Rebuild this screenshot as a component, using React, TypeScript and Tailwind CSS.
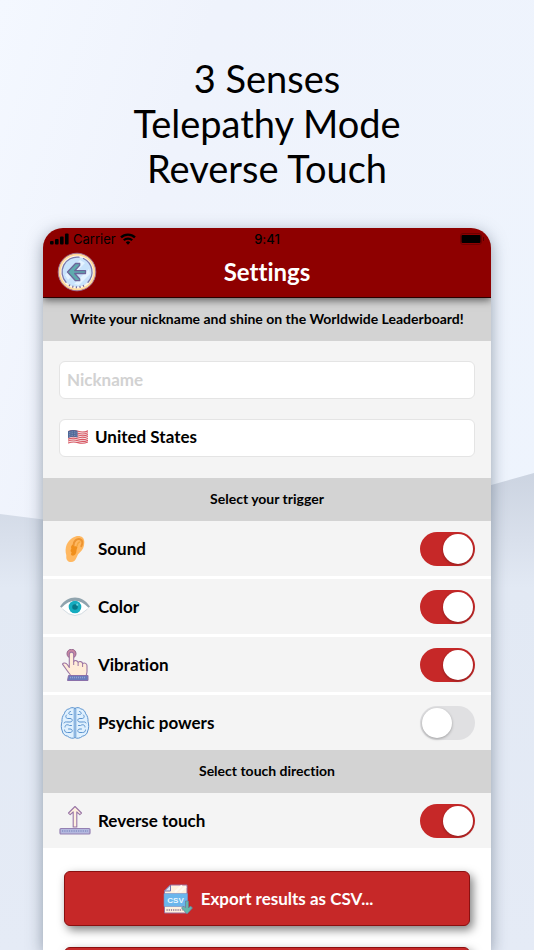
import { useState } from "react";
import type { ReactNode } from "react";

function Backdrop() {
  return (
    <svg
      className="absolute inset-0 h-full w-full"
      viewBox="0 0 534 950"
      preserveAspectRatio="none"
      aria-hidden="true"
    >
      <defs>
        <linearGradient id="sky" x1="0" y1="0" x2="1" y2="0.6">
          <stop offset="0" stopColor="#f4f8ff" />
          <stop offset="0.3" stopColor="#eff3fc" />
          <stop offset="1" stopColor="#eef4fd" />
        </linearGradient>
        <linearGradient id="fold" x1="0" y1="0" x2="0" y2="1">
          <stop offset="0" stopColor="#ccd4e1" />
          <stop offset="0.14" stopColor="#d9e0ec" />
          <stop offset="0.24" stopColor="#e2e9f4" />
          <stop offset="1" stopColor="#e5ebf6" />
        </linearGradient>
      </defs>
      <rect width="534" height="950" fill="url(#sky)" />
      <path d="M0 514 L267 548 L534 473 V950 H0Z" fill="url(#fold)" />
    </svg>
  );
}

function SignalIcon() {
  return (
    <svg className="h-3 w-[19px]" viewBox="0 0 19 12" aria-hidden="true">
      <rect x="0" y="8" width="3.6" height="3.5" rx="1" />
      <rect x="5" y="6" width="3.6" height="5.5" rx="1" />
      <rect x="10" y="3.500" width="3.6" height="8" rx="1" />
      <rect x="15" y="0.500" width="3.6" height="11" rx="1" />
    </svg>
  );
}

function WifiIcon() {
  return (
    <svg className="h-3 w-4" viewBox="0 0 16 12" fill="none" stroke="black" strokeWidth="2.3" aria-hidden="true">
      <path d="M1 4.4a10 10 0 0 1 14 0" />
      <path d="M3.8 7.3a6 6 0 0 1 8.4 0" />
      <path d="M8 11.8 5.8 9.4a3.2 3.2 0 0 1 4.4 0Z" fill="black" stroke="none" />
    </svg>
  );
}

function BatteryIcon() {
  return (
    <svg className="h-3 w-6" viewBox="0 0 24 12" aria-hidden="true">
      <rect x="0.5" y="0.5" width="21" height="11" rx="2.5" fill="none" stroke="#6c0000" />
      <rect x="1.500" y="2" width="19" height="8" rx="1" />
      <path d="M23.500 4v4" stroke="#5c0000" />
    </svg>
  );
}

function BackIcon() {
  return (
    <svg className="h-10 w-10" viewBox="0 0 40 40" aria-hidden="true">
      <circle cx="20" cy="20" r="18.800" fill="#ffd899" stroke="#9b719b" strokeWidth="0.900" />
      <circle cx="20" cy="20" r="16.500" fill="#fdf5e8" />
      <circle cx="20" cy="20" r="15" fill="#c9e3fb" />
      <path d="M8 23 23 8l5 3L11 28ZM17 32 32 17l1 5-11 11Z" fill="#e5f4ff" />
      <path
        d="M26.500 6.500A15 15 0 0 1 31 30.200M9 30.200A15 15 0 0 1 22 5.200"
        fill="none"
        stroke="#7a79ad"
        strokeWidth="1.300"
        strokeLinecap="round"
      />
      <path d="M12 33a15.500 15.500 0 0 0 16 0" fill="none" stroke="#776c9e" strokeWidth="2" strokeDasharray="1.200 2.400" />
      <path
        d="M10.500 20 18.500 11.500h4.200v1.700L17.700 18.700H28.500v2.800H17.700l5 5.500v1.700h-4.200Z"
        fill="#5eaaae"
        stroke="#6c669b"
        strokeWidth="1.300"
        strokeLinejoin="round"
      />
    </svg>
  );
}

function FlagIcon() {
  return (
    <svg className="h-4 w-5" viewBox="0 0 20 16" aria-hidden="true">
      <path d="M0 2.2Q5 0 10 1.8T20 1.2V13.4Q15 15.2 10 14T0 14.8Z" fill="#f5eeee" />
      <g fill="none" stroke="#d95763" strokeWidth="1.1">
        <path d="M0 2.6Q5 .6 10 2.3T20 1.8" />
        <path d="M0 4.5Q5 2.5 10 4.2T20 3.7" />
        <path d="M0 6.4Q5 4.4 10 6.1T20 5.6" />
        <path d="M0 8.3Q5 6.3 10 8T20 7.5" />
        <path d="M0 10.2Q5 8.2 10 9.9T20 9.4" />
        <path d="M0 12.1Q5 10.1 10 11.8T20 11.3" />
        <path d="M0 14.1Q5 12.1 10 13.6T20 13" />
      </g>
      <path d="M0 2.2Q5 0 9.5 1.8V8.4Q5 6.8 0 8.9Z" fill="#4d6697" />
      <path
        d="M1 3.8Q5 2 9 3.5M1 5.6Q5 3.8 9 5.3M1 7.4Q5 5.6 9 7.1"
        fill="none"
        stroke="#b9c6dc"
        strokeWidth="0.6"
        strokeDasharray="0.8 0.9"
      />
    </svg>
  );
}

function EarIcon() {
  return (
    <svg className="h-8 w-8" viewBox="0 0 32 32" aria-hidden="true">
      <path
        d="M16.500 3.500C21 2 25.300 4 25.300 9c0 5-1.700 8-4.500 10.500-2 1.800-2.300 3-3 4.500-1 3-3 5-5.700 5C9 29 7 27 7.300 23.500c.2-1.700-.4-2.500-.6-4C6 12 9.500 6 16.500 3.500Z"
        fill="#ffb861"
      />
      <path
        d="M14.500 12.500C14.500 8 18 5.300 21 6.200c2.900 1 2.900 4 1.300 7"
        fill="none"
        stroke="#ec9432"
        strokeWidth="2"
        strokeLinecap="round"
      />
      <path
        d="M14 11.500c-.3 2.300 2.700 1.500 4 2 1 1-.5 2.300-.5 4 .1 3.500-2.200 5.700-4.500 5-1.400-.4-1-2-.4-3.200-1.600-1-1-2.700-.2-3.600-.8-1.500-.1-3.700 1.600-4.200Z"
        fill="#f08f1b"
      />
      <path d="M18 13.500C18.500 10 20 8.500 21.500 9" fill="none" stroke="#f5a73f" strokeWidth="1.500" />
    </svg>
  );
}

function EyeIcon() {
  return (
    <svg className="h-8 w-8" viewBox="0 0 32 32" aria-hidden="true">
      <path d="M2 16Q16 2 30 16Q16 32 2 16Z" fill="#fff" />
      <path d="M3.500 18Q16 31 28.500 18" fill="none" stroke="#d4dde3" strokeWidth="1" />
      <path d="M1 15.500C9 3.500 23 3.500 31 15.500l-1.500 1.200C21 7.500 11 7.500 2.500 16.700Z" fill="#90a4ae" />
      <circle cx="16" cy="16" r="6.300" fill="#15acbf" />
      <circle cx="16" cy="16" r="2.800" fill="#087788" />
      <circle cx="18.300" cy="13.700" r="1.100" fill="#6ed3df" />
    </svg>
  );
}

function TapIcon() {
  return (
    <svg className="h-8 w-8" viewBox="0 0 32 32" strokeLinejoin="round" aria-hidden="true">
      <circle cx="12.500" cy="4.700" r="4.500" fill="#ca87a2" stroke="#93668e" />
      <path
        d="M10.300 18.500V5.300a2.200 2.200 0 0 1 4.400 0v7.400c1-1.700 3.700-1.500 4.400.7 1.500-1.500 4-.9 4.500 1.100 2.200-1.200 4.400.1 4.400 2.300v5.700c0 1.700-.7 2.700-.7 4.300H11.600c-.3-1.700-2-3-3-4.500l-5.100-7.200c1-1.800 3.500-1.100 4.800.4Z"
        fill="#ffecd8"
        stroke="#9c75a3"
        strokeWidth="1.100"
      />
      <path d="M14.700 12.500V16M19.100 13.500V17M23.600 14.500V18" stroke="#9c75a3" />
      <path d="M9.500 26.500h19.500v5h-20.500Z" fill="#6a7cbb" stroke="#8b70aa" />
      <path d="M11 28.500h16" stroke="#93a0d4" strokeWidth="1.500" strokeDasharray="1 1" />
    </svg>
  );
}

function BrainIcon() {
  return (
    <svg
      className="h-8 w-8"
      viewBox="0 0 32 32"
      fill="none"
      stroke="#5b93cf"
      strokeWidth="1"
      strokeLinecap="round"
      aria-hidden="true"
    >
      <path
        d="M16 1.300C14 0 11.500.6 10.300 1.800 7.300 2.200 5.800 4.500 5.300 6.800 3.300 9 2.800 12 3 14.500 2 17.500 2 21.500 3.300 24c.4 3 2.700 4.800 5.200 5.200 2.500 2.300 6 2.600 7.500 1.300 1.500 1.300 5 1 7.500-1.300 2.500-.4 4.800-2.200 5.200-5.200 1.300-2.500 1.300-6.500.3-9.500.2-2.500-.3-5.500-2.300-7.700-.5-2.300-2-4.600-5-5C20.500.6 18 0 16 1.300Z"
        fill="#dff0fe"
      />
      <path d="M15.200 2v28M16.800 2v28" strokeWidth="0.900" />
      <path d="M11.500 4.500C8.500 5.500 9.500 7.500 11.500 7.500h1.500M7.500 8C6 9.500 7 11.500 9 11.500h2c3 0 3 3.500 0 3.500H9c-2 0-3.500-.5-4 1M6 20c0-2.500 2.500-2.800 4.500-1.500h2M9.500 22h1.500c3 0 3 3.500 0 3.500H8.500c-2 0-3-1-3-2.500" />
      <path d="M20.500 4.500C23.500 5.500 22.500 7.500 20.500 7.500h-1.500M24.500 8c1.500 1.500.5 3.500-1.500 3.500h-2c-3 0-3 3.500 0 3.500h2c2 0 3.500-.5 4 1M26 20c0-2.500-2.500-2.800-4.500-1.500h-2M22.500 22h-1.500c-3 0-3 3.500 0 3.500h2.500c2 0 3-1 3-2.500" />
    </svg>
  );
}

function ReverseIcon() {
  return (
    <svg className="h-8 w-8" viewBox="0 0 32 32" strokeLinejoin="round" aria-hidden="true">
      <path
        d="m16 1.500 6.500 6.500-1.700 1.700-3-2.900V22h-3.600V6.800l-3 2.900-1.700-1.700Z"
        fill="#fff0df"
        stroke="#9975a6"
        strokeWidth="1.100"
      />
      <rect x="1" y="23.500" width="30" height="5.500" rx="1" fill="#b4b8df" stroke="#9480b2" strokeWidth="1.200" />
      <path d="M3 26h26" stroke="#8490c4" strokeWidth="1.500" strokeDasharray="1.200 1.100" />
    </svg>
  );
}

function CsvIcon() {
  return (
    <svg className="h-8 w-8" viewBox="0 0 32 32" strokeLinejoin="round" aria-hidden="true">
      <path d="M9.500 2H26v28H3.500V8Z" fill="#fff1df" stroke="#9b719f" />
      <path d="M3.500 8h6V2Z" fill="#d9e9fa" stroke="#7879ae" />
      <path d="M14 9 21 2.500M19 9l6-5.500" stroke="#fffaf3" strokeWidth="2" />
      <rect x="3" y="10.500" width="23.500" height="13" fill="#6bb6ec" stroke="#7b8cc0" strokeWidth="0.600" />
      <path d="M5.500 27h16" stroke="#81718f" strokeWidth="1.500" strokeDasharray="1.200 1" />
      <text
        x="14.500"
        y="20"
        textAnchor="middle"
        fontFamily="Liberation Sans, sans-serif"
        fontSize="8"
        fontWeight="700"
        fill="#e9f8ff"
      >
        CSV
      </text>
      <path d="M24.500 18h3v7l2-2 2 2-5.500 6-5.500-6 2-2 2 2Z" fill="#63b7ac" stroke="#69769b" strokeWidth="0.700" />
    </svg>
  );
}

function SectionTitle({ children }: { children: ReactNode }) {
  return (
    <h2 className="flex h-[43px] items-center justify-center bg-[#d3d3d3] pb-0.5 text-center text-[14px] font-bold">
      {children}
    </h2>
  );
}

interface ToggleRowProps {
  icon: ReactNode;
  label: string;
  defaultChecked?: boolean;
}

function ToggleRow({ icon, label, defaultChecked = false }: ToggleRowProps) {
  const [checked, setChecked] = useState(defaultChecked);

  return (
    <label className="flex h-full items-center gap-[7px] bg-[#f4f4f4] px-4 text-[17px] font-bold">
      {icon}
      <span className="flex-1">{label}</span>
      <input
        type="checkbox"
        checked={checked}
        onChange={(e) => setChecked(e.target.checked)}
        className="h-[34px] w-[55px] shrink-0 cursor-pointer appearance-none rounded-full bg-[#e0e0e2] p-0.5 transition-colors before:block before:size-[30px] before:rounded-full before:bg-white before:shadow-[0_1px_3px_rgba(0,0,0,0.3)] before:transition-transform checked:bg-[#c62828] checked:before:translate-x-[21px]"
      />
    </label>
  );
}

const triggers = [
  { label: "Sound", icon: <EarIcon />, on: true },
  { label: "Color", icon: <EyeIcon />, on: true },
  { label: "Vibration", icon: <TapIcon />, on: true },
  { label: "Psychic powers", icon: <BrainIcon />, on: false },
];

export default function App() {
  const [nickname, setNickname] = useState("");

  return (
    <main className="relative flex h-screen flex-col overflow-hidden font-['Lato',sans-serif] text-black [font-variant-ligatures:none]">
      <Backdrop />

      <h1 className="relative shrink-0 pt-14 pb-[37px] text-center text-[38px] leading-[45px]">
        3 Senses
        <br />
        Telepathy Mode
        <br />
        Reverse Touch
      </h1>

      <div className="relative mx-[43px] flex-1 overflow-hidden rounded-t-[20px] bg-white shadow-[0_4px_16px_rgba(60,75,95,0.5)]">
        {/* Header */}
        <header className="relative h-[70px] border-b border-[#2a0000] bg-[#8e0000] shadow-[0_2px_8px_rgba(0,0,0,0.6)]">
          <div className="grid grid-cols-3 items-center px-[7px] pt-[3px] font-['Inter',sans-serif] text-[13px] leading-4">
            <div className="flex items-center gap-1">
              <SignalIcon />
              <span>Carrier</span>
              <WifiIcon />
            </div>
            <span className="text-center font-medium">9:41</span>
            <span className="flex justify-end">
              <BatteryIcon />
            </span>
          </div>
          <div className="grid grid-cols-[40px_1fr_40px] items-center px-[14px] pt-[5px]">
            <button type="button" aria-label="Back" className="cursor-pointer rounded-full">
              <BackIcon />
            </button>
            <span className="text-center text-[24px] leading-8 font-bold text-white">Settings</span>
          </div>
        </header>

        {/* Profile */}
        <SectionTitle>Write your nickname and shine on the Worldwide Leaderboard!</SectionTitle>
        <div className="flex flex-col gap-5 bg-[#f4f4f4] px-4 pt-5 pb-[21px] text-[17px] font-bold">
          <input
            type="text"
            aria-label="Nickname"
            placeholder="Nickname"
            value={nickname}
            onChange={(e) => setNickname(e.target.value)}
            className="h-[38px] w-full rounded-md border border-[#e4e4e4] bg-white px-[7px] pb-0.5 outline-none placeholder:text-[#d2d2d2]"
          />
          <div className="flex h-[38px] items-center gap-[7px] rounded-md border border-[#e4e4e4] bg-white px-2 pb-0.5">
            <FlagIcon />
            <select aria-label="Country" className="flex-1 appearance-none bg-transparent outline-none">
              <option>United States</option>
            </select>
          </div>
        </div>

        {/* Triggers */}
        <SectionTitle>Select your trigger</SectionTitle>
        <div className="grid auto-rows-[55px] gap-[3px] bg-white">
          {triggers.map((trigger) => (
            <ToggleRow
              key={trigger.label}
              icon={trigger.icon}
              label={trigger.label}
              defaultChecked={trigger.on}
            />
          ))}
        </div>

        {/* Touch direction */}
        <SectionTitle>Select touch direction</SectionTitle>
        <div className="h-[55px]">
          <ToggleRow icon={<ReverseIcon />} label="Reverse touch" defaultChecked />
        </div>

        {/* Actions */}
        <div className="flex flex-col gap-[21px] px-[21px] pt-[23px]">
          <button
            type="button"
            className="flex h-[55px] w-full cursor-pointer items-center justify-center gap-2 rounded-md border border-[#8b1010] bg-[#c62828] text-[17px] font-bold text-white shadow-[3px_4px_10px_rgba(0,0,0,0.5)]"
          >
            <CsvIcon />
            Export results as CSV...
          </button>
          <button
            type="button"
            aria-label="More actions"
            className="h-[55px] w-full cursor-pointer rounded-md border border-[#8b1010] bg-[#c62828] shadow-[3px_4px_10px_rgba(0,0,0,0.5)]"
          />
        </div>
      </div>
    </main>
  );
}
